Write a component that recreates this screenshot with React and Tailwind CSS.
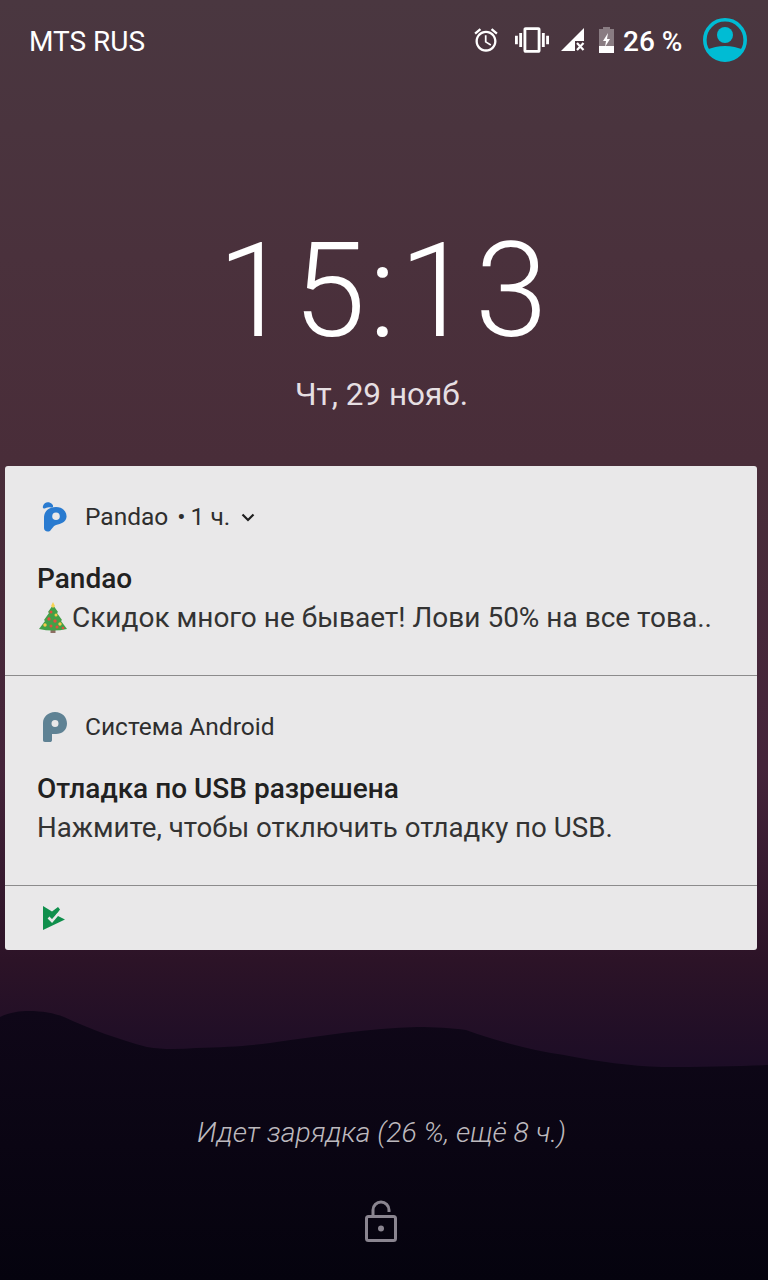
import React from 'react'

const Wallpaper = () => (
  <svg className="absolute inset-0" width="768" height="1280" viewBox="0 0 768 1280">
    <defs>
      <linearGradient id="sky" x1="0" y1="0" x2="0" y2="1">
        <stop offset="0" stopColor="#4a3740" />
        <stop offset="0.2" stopColor="#4a313c" />
        <stop offset="0.36" stopColor="#492d39" />
        <stop offset="0.6" stopColor="#45243a" />
        <stop offset="0.75" stopColor="#2c1327" />
        <stop offset="0.83" stopColor="#1d0d26" />
        <stop offset="1" stopColor="#140a20" />
      </linearGradient>
      <linearGradient id="hill" x1="0" y1="0" x2="0" y2="1">
        <stop offset="0" stopColor="#0f0718" />
        <stop offset="1" stopColor="#05030e" />
      </linearGradient>
    </defs>
    <rect width="768" height="1280" fill="url(#sky)" />
    <path
      d="M0 1017 C10 1012 20 1011 29 1011 C42 1011 54 1013 64 1017 C90 1029 120 1040 147 1047 C165 1050 180 1049 196 1048 C225 1047 248 1046 270 1043 C320 1036 370 1028 417 1027 C435 1027 452 1028 466 1030 C500 1042 530 1050 564 1055 C600 1062 630 1066 662 1067 C700 1067 740 1066 768 1065 L768 1280 L0 1280 Z"
      fill="url(#hill)"
    />
  </svg>
)

const PandaoIcon = () => (
  <svg width="28" height="32" viewBox="0 0 28 32">
    <path d="M2 5 C3 1 8 0 11 3 C13 5 12 7 10 6.500 C7 5.500 5 7 3.500 7.500 C2 8 1.500 6.500 2 5 Z" fill="#2a7bd0" />
    <path
      fillRule="evenodd"
      d="M15 6 C22 6 26 11 25.500 16 C25 21 20 23 15 24 C12 25 11 28 9 30 C6 31.500 3 30 3 27 L3 17 C3 10 8 6 15 6 Z M15 11.500 A3.800 3.800 0 1 0 15.010 19.100 A3.800 3.800 0 1 0 15 11.500 Z"
      fill="#2a7bd0"
    />
  </svg>
)

const AndroidIcon = () => (
  <svg width="26" height="32" viewBox="0 0 26 32" className="ml-[1px]">
    <path
      fillRule="evenodd"
      d="M13 1 C20 1 25 6 25 12.500 C25 19 20 23 14 23 L10 23 L10 29 C10 30.500 9 31 8 31 L3 31 C1.500 31 1 30 1 29 L1 12 C1 6 6 1 13 1 Z M13 9 A3.500 3.500 0 1 0 13.010 16 A3.500 3.500 0 1 0 13 9 Z"
      fill="#5f8294"
    />
  </svg>
)

const PlayCheckIcon = () => (
  <svg width="22" height="24" viewBox="0 0 22 24">
    <path d="M0 0 L9 5.500 L15 1 L17 3.500 L13 9 L22 13.500 L0 24 Z" fill="#0f8f4c" />
    <path d="M5.500 11.500 L9 15 L15.500 7.500" fill="none" stroke="#e9e8e9" strokeWidth="2.600" />
  </svg>
)

const TreeEmoji = () => (
  <svg width="32" height="32" viewBox="0 0 32 32" className="mr-[3px]">
    <rect x="13.500" y="27" width="5" height="4" fill="#8d6e63" />
    <path d="M16 3 L21 10 L20 11 L25 18 L24 19 L30 27 Q16 30 2 27 L8 19 L7 18 L12 11 L11 10 Z" fill="#43a047" />
    <path d="M16 0 L18 4 L16 6 L14 4 Z" fill="#f7d354" />
    <circle cx="14" cy="10" r="1.500" fill="#e0503f" />
    <circle cx="19" cy="13" r="1.500" fill="#f7c948" />
    <circle cx="12" cy="17" r="1.700" fill="#e0503f" />
    <circle cx="18" cy="19" r="1.700" fill="#e0503f" />
    <circle cx="23" cy="22" r="1.700" fill="#f7c948" />
    <circle cx="8" cy="23" r="1.700" fill="#f7c948" />
    <circle cx="14" cy="24" r="1.500" fill="#e0503f" />
    <circle cx="20" cy="25" r="1.500" fill="#e0503f" />
    <circle cx="26" cy="26" r="1.300" fill="#e0503f" />
  </svg>
)

const StatusIcons = () => (
  <div className="flex items-center">
    <svg width="28" height="28" viewBox="0 0 24 24" fill="#fff">
      <path d="M22 5.720l-4.600-3.860-1.290 1.530 4.600 3.860L22 5.720zM7.880 3.390L6.600 1.860 2 5.710l1.290 1.530 4.590-3.850zM12.500 8H11v6l4.750 2.850.75-1.230-4-2.370V8zM12 4c-4.970 0-9 4.030-9 9s4.030 9 9 9c4.970 0 9-4.030 9-9s-4.030-9-9-9zm0 16c-3.870 0-7-3.130-7-7s3.130-7 7-7 7 3.130 7 7-3.130 7-7 7z" />
    </svg>
    <svg width="34" height="34" viewBox="0 0 24 24" fill="#fff" className="ml-[15px]">
      <path d="M0 15h2V9H0v6zm3 2h2V7H3v10zm19-8v6h2V9h-2zm-3 8h2V7h-2v10zM16.500 3h-9C6.670 3 6 3.670 6 4.500v15c0 .830.670 1.500 1.500 1.500h9c.830 0 1.500-.670 1.500-1.500v-15c0-.830-.670-1.500-1.500-1.500zM16 19H8V5h8v14z" />
    </svg>
    <svg width="24" height="24" viewBox="0 0 24 24" className="ml-[12px]">
      <path d="M0 23 L23 0 L23 13 L14 13 L14 23 Z" fill="#fff" />
      <path d="M16 15 L22.500 22 M22.500 15 L16 22" stroke="#fff" strokeWidth="2.200" />
    </svg>
    <svg width="15" height="26" viewBox="0 0 15 26" className="ml-[14px]">
      <path d="M4 0 H11 V2 H15 V26 H0 V2 H4 Z" fill="#fff" fillOpacity="0.35" />
      <rect x="0" y="19" width="15" height="7" fill="#fff" />
      <path d="M9 6 L4 14 L7 14 L6 20 L11 12 L8 12 Z" fill="#fff" />
    </svg>
  </div>
)

const Avatar = () => (
  <svg width="44" height="44" viewBox="0 0 44 44">
    <defs>
      <clipPath id="av">
        <circle cx="22" cy="22" r="20" />
      </clipPath>
    </defs>
    <circle cx="22" cy="22" r="20.200" fill="none" stroke="#00bcd4" strokeWidth="3.600" />
    <circle cx="22" cy="17" r="8" fill="#00bcd4" />
    <ellipse cx="22" cy="42" rx="25" ry="14" fill="#00bcd4" clipPath="url(#av)" />
  </svg>
)

const Chevron = () => (
  <svg width="14" height="9" viewBox="0 0 14 9" fill="none" stroke="#1f1f1f" strokeWidth="2.200">
    <path d="M1.500 1.500 L7 7 L12.500 1.500" />
  </svg>
)

const Notification = ({ icon, header, title, children }) => (
  <div className="h-[210px] border-b border-[#8c8b8c] flex flex-col">
    <div className="flex items-center h-[32px] mt-[35px] pl-[32px]">
      <div className="w-[48px] flex pl-[4px]">{icon}</div>
      <div className="text-[24.500px] text-[#2e2e2e] flex items-center">{header}</div>
    </div>
    <div className="mt-[28px] pl-[32px] text-[28px] leading-[36px] font-medium text-[#212121]">{title}</div>
    <div className="mt-[3px] pl-[32px] text-[28px] leading-[36px] text-[#333] flex items-center whitespace-nowrap">{children}</div>
  </div>
)

const App = () => {
  return (
    <div className="relative w-[768px] h-[1280px] overflow-hidden font-['Roboto',sans-serif]">
      <Wallpaper />
      <div className="relative flex flex-col h-full">
        {/* Status bar */}
        <div className="flex items-center justify-between h-[40px] mt-[20px] pl-[29px] pr-[21px] text-white">
          <span className="text-[28px] font-normal mt-[3px]">MTS RUS</span>
          <div className="flex items-center">
            <StatusIcons />
            <span className="ml-[9px] mt-[3px] text-[28px] font-medium w-[58px] whitespace-nowrap">26 %</span>
            <div className="ml-[22px]"><Avatar /></div>
          </div>
        </div>

        {/* Clock */}
        <div className="mt-[166px] text-center text-white text-[131px] tracking-[3px] leading-[130px] font-light h-[130px]">15:13</div>
        <div className="mt-[19px] pr-[5px] text-center text-[#e6dfe2] text-[31.500px] leading-[40px]">Чт, 29 нояб.</div>

        {/* Notifications */}
        <div className="mt-[51px] ml-[5px] w-[752px] h-[484px] bg-[#e9e8e9] rounded-[3px] overflow-hidden">
          <Notification
            icon={<PandaoIcon />}
            header={<>Pandao<span className="ml-[9px] mr-[5px]">•</span>1 ч.<span className="ml-[11px]"><Chevron /></span></>}
            title="Pandao"
          >
            <TreeEmoji />
            <span>Скидок много не бывает! Лови 50% на все това..</span>
          </Notification>
          <Notification icon={<AndroidIcon />} header="Система Android" title="Отладка по USB разрешена">
            <span className="text-[27.700px]">Нажмите, чтобы отключить отладку по USB.</span>
          </Notification>
          <div className="h-[64px] pl-[38px] flex items-center">
            <PlayCheckIcon />
          </div>
        </div>

        {/* Charging */}
        <div className="mt-[165px] pr-[5px] text-center italic font-light text-[#bdb9be] text-[28.400px] leading-[36px]">Идет зарядка (26 %, ещё 8 ч.)</div>

        <div className="mt-[49px] flex justify-center">
          <svg width="32" height="42" viewBox="0 0 32 42" fill="none" className="ml-[-6px]">
            <path d="M8 17 V10 A8 8 0 0 1 24 10 V12" stroke="#8a8590" strokeWidth="3" />
            <rect x="1.500" y="16.500" width="29" height="24" rx="2" stroke="#8a8590" strokeWidth="3" />
            <circle cx="16" cy="28.500" r="3" fill="#8a8590" />
          </svg>
        </div>
      </div>
    </div>
  )
}

export default App
